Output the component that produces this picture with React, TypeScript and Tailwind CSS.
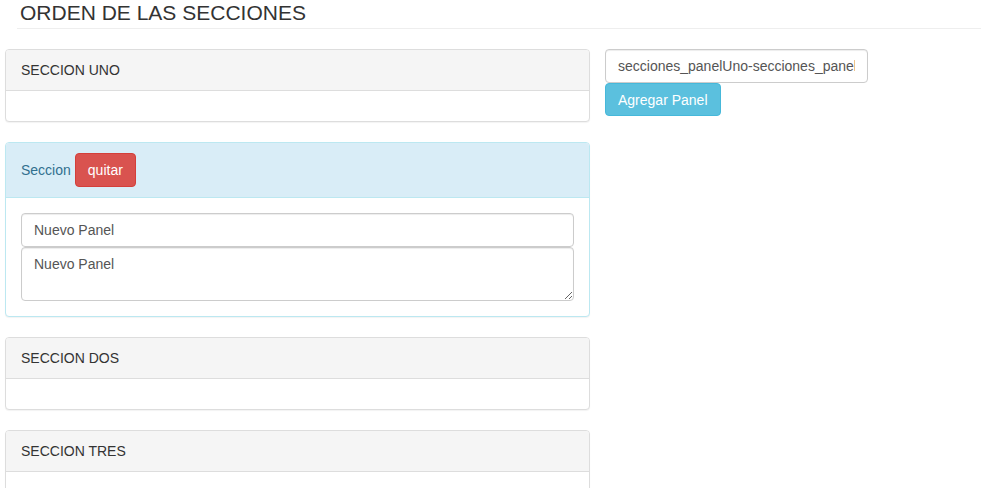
import React from "react";

function Panel({ title }: { title: string }) {
  return (
    <div className="mb-[20px] rounded-[4px] border border-[#ddd] bg-white shadow-[0_1px_1px_rgba(0,0,0,0.05)]">
      <div className="rounded-t-[3px] border-b border-[#ddd] bg-[#f5f5f5] px-[15px] py-[10px] text-[14px] leading-[20px] text-[#333]">
        {title}
      </div>
      <div className="p-[15px]"></div>
    </div>
  );
}

export default function App() {
  return (
    <div className="h-[488px] w-[981px] overflow-hidden bg-white font-['Liberation_Sans',Arial,sans-serif] text-[14px] leading-[20px] text-[#333]">
      <div className="ml-[17px] h-[29px] border-b border-[#eee] pl-[3px] pt-[2px]">
        <h1 className="text-[21px] font-normal leading-[22px] text-[#333]">ORDEN DE LAS SECCIONES</h1>
      </div>
      <div className="mt-[20px] flex gap-[15px] pl-[5px]">
        <div className="w-[585px] shrink-0">
          <Panel title="SECCION UNO" />
          <div className="mb-[20px] rounded-[4px] border border-[#bce8f1] bg-white shadow-[0_1px_1px_rgba(0,0,0,0.05)]">
            <div className="flex items-center rounded-t-[3px] border-b border-[#bce8f1] bg-[#d9edf7] px-[15px] py-[10px] text-[#31708f]">
              <span>Seccion</span>
              <button className="ml-[4px] h-[34px] rounded-[4px] border border-[#d43f3a] bg-[#d9534f] px-[12px] text-[14px] leading-[20px] text-white">
                quitar
              </button>
            </div>
            <div className="flex flex-col p-[15px]">
              <input
                defaultValue="Nuevo Panel"
                className="h-[34px] w-full rounded-[4px] border border-[#ccc] px-[12px] py-[6px] text-[14px] text-[#555] shadow-[inset_0_1px_1px_rgba(0,0,0,0.075)] outline-none"
              />
              <textarea
                rows={2}
                defaultValue="Nuevo Panel"
                className="block h-[54px] w-full rounded-[4px] border border-[#ccc] px-[12px] py-[6px] text-[14px] leading-[20px] text-[#555] shadow-[inset_0_1px_1px_rgba(0,0,0,0.075)] outline-none"
              />
            </div>
          </div>
          <Panel title="SECCION DOS" />
          <Panel title="SECCION TRES" />
        </div>
        <div className="flex w-[263px] shrink-0 flex-col items-start">
          <input
            defaultValue="secciones_panelUno-secciones_panelDos-secciones_panelTres"
            className="h-[34px] w-[263px] rounded-[4px] border border-[#ccc] px-[12px] py-[6px] text-[14px] text-[#555] shadow-[inset_0_1px_1px_rgba(0,0,0,0.075)] outline-none"
          />
          <button className="h-[33px] rounded-[4px] border border-[#46b8da] bg-[#5bc0de] px-[12px] text-[14px] leading-[20px] text-white">
            Agregar Panel
          </button>
        </div>
      </div>
    </div>
  );
}
